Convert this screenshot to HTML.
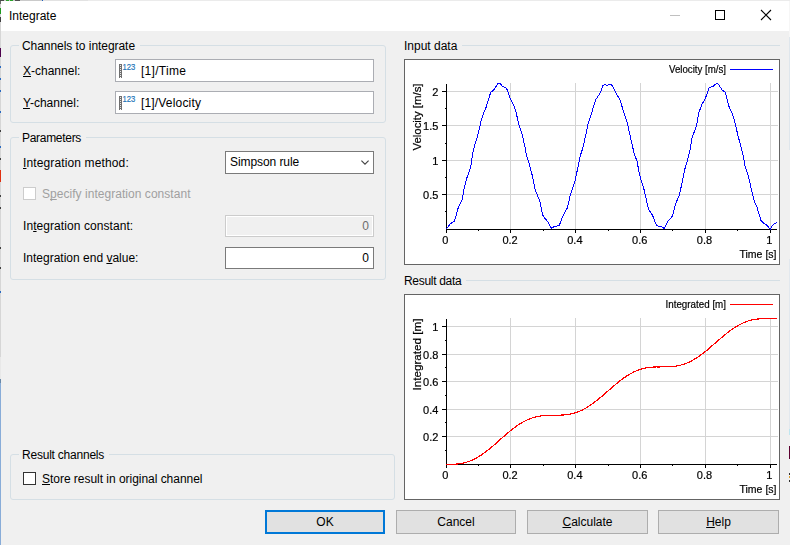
<!DOCTYPE html>
<html lang="en"><head><meta charset="utf-8"><title>Integrate</title>
<style>
html,body{margin:0;padding:0;}
body{width:790px;height:545px;overflow:hidden;background:#f0f0f0;font-family:"Liberation Sans",sans-serif;font-size:12px;color:#000;position:relative;}
.abs,.lbl,.grp,.inp,.btn,.cb,.chart,.gl,.sep{position:absolute;box-sizing:border-box;}
.titlebar{position:absolute;left:1px;top:1px;width:788px;height:30px;background:#fff;}
.title{position:absolute;left:9px;top:8px;font-size:12px;line-height:16px;white-space:nowrap;}
.lbl{white-space:nowrap;line-height:16px;height:16px;}
.grp{border:1px solid #d5dfe5;border-radius:3px;}
.gl{background:#f0f0f0;padding:0 5px 0 3px;line-height:16px;height:16px;white-space:nowrap;}
.inp{background:#fff;border:1px solid #abadb3;height:23px;line-height:21px;white-space:nowrap;}
.inp.cmb{border-color:#7a7a7a;}
.inp.num{height:22px;line-height:20px;border-color:#7a7a7a;text-align:right;padding-right:4px;}
.inp.dis{background:#f0f0f0;border-color:#cccccc;color:#6d6d6d;box-shadow:inset 0 0 0 1px #fff;}
.btn{height:24px;border:1px solid #adadad;background:#e1e1e1;text-align:center;line-height:22px;}
.btn.def{border:2px solid #0078d7;line-height:20px;}
.cb{width:13px;height:13px;border:1px solid #333;background:#fff;}
.cb.dis{border-color:#ccc;}
.sep{height:1px;background:#d5dfe5;}
.chart{left:404px;width:376px;height:206px;background:#fff;}
.chart svg{position:absolute;left:0;top:0;display:block;will-change:transform;}
.t{font-family:"Liberation Sans",sans-serif;font-size:11px;fill:#000;stroke:#000;stroke-width:0.2px;}
u{text-decoration:underline;text-decoration-skip-ink:none;text-underline-offset:1px;text-decoration-thickness:1px;}
</style></head><body>
<div class="titlebar"></div>
<svg class="abs" style="left:0;top:0" width="790" height="545" viewBox="0 0 790 545" shape-rendering="crispEdges">
<rect x="0" y="0" width="790" height="1" fill="#ebebeb"/>
<rect x="0" y="0" width="42" height="1" fill="#cacaca"/><rect x="43" y="0" width="45" height="1" fill="#e2e2e2"/><rect x="0" y="0" width="4" height="1" fill="#4a4a4a"/>
<rect x="6" y="0" width="3" height="1" fill="#2aa02a"/><rect x="10" y="0" width="3" height="1" fill="#2aa02a"/>
<rect x="15" y="0" width="5" height="1" fill="#505050"/><rect x="42" y="0" width="1" height="1" fill="#2060c0"/>
<rect x="0" y="1" width="1" height="378" fill="#d6d6d6"/>
<rect x="0" y="357" width="1" height="22" fill="#e8e8e8"/>
<rect x="0" y="1" width="1" height="3" fill="#6a6a6a"/>
<rect x="0" y="8" width="1" height="6" fill="#1f9a1f"/>
<rect x="0" y="17" width="1" height="5" fill="#404040"/>
<rect x="0" y="48" width="1" height="9" fill="#4c004c"/>
<rect x="0" y="66" width="1" height="2" fill="#2a6ac0"/><rect x="0" y="78" width="1" height="2" fill="#2a6ac0"/><rect x="0" y="90" width="1" height="2" fill="#2a6ac0"/><rect x="0" y="111" width="1" height="2" fill="#2a6ac0"/>
<rect x="0" y="130" width="1" height="2" fill="#404040"/><rect x="0" y="146" width="1" height="2" fill="#2a6ac0"/><rect x="0" y="158" width="1" height="2" fill="#404040"/>
<rect x="0" y="170" width="1" height="12" fill="#e03010"/>
<rect x="0" y="195" width="1" height="2" fill="#404040"/><rect x="0" y="207" width="1" height="2" fill="#404040"/><rect x="0" y="247" width="1" height="2" fill="#404040"/><rect x="0" y="267" width="1" height="2" fill="#404040"/><rect x="0" y="291" width="1" height="2" fill="#2a6ac0"/>
<rect x="0" y="379" width="1" height="166" fill="#88acd8"/>
<rect x="0" y="379" width="1" height="4" fill="#6888a8"/>
<rect x="789" y="1" width="1" height="36" fill="#f6f6f6"/>
<rect x="789" y="37" width="1" height="113" fill="#dfe6ec"/>
<rect x="789" y="259" width="1" height="170" fill="#e2e8ee"/>
<rect x="789" y="429" width="1" height="6" fill="#bfe6f0"/>
<rect x="789" y="446" width="1" height="13" fill="#5c0030"/>
<rect x="789" y="473" width="1" height="2" fill="#303030"/><rect x="789" y="476" width="1" height="2" fill="#e0a030"/><rect x="789" y="480" width="1" height="2" fill="#303030"/>
</svg>
<div class="title">Integrate</div>
<svg class="abs" style="left:660px;top:0" width="130" height="31" viewBox="660 0 130 31">
<rect x="670" y="15" width="10" height="1" fill="#c0c0c0"/>
<rect x="715.5" y="10.5" width="9" height="9" fill="none" stroke="#000" stroke-width="1"/>
<path d="M761 10 L771 20 M771 10 L761 20" stroke="#000" stroke-width="1.1" fill="none"/>
</svg>

<div class="grp" style="left:10px;top:45px;width:376px;height:78px"></div>
<div class="gl" style="left:19px;top:38px;letter-spacing:-0.05px">Channels to integrate</div>
<div class="lbl" style="left:23px;top:63px"><u>X</u>-channel:</div>
<div class="inp" style="left:115px;top:59px;width:259px"><svg class="abs" style="left:2px;top:2px" width="20" height="16" viewBox="118 62 20 16">
<rect x="119" y="64" width="3" height="14" fill="#6e6e6e"/>
<rect x="120" y="65" width="1" height="1" fill="#e8e8e8"/><rect x="120" y="67" width="1" height="1" fill="#e8e8e8"/><rect x="120" y="69" width="1" height="1" fill="#e8e8e8"/><rect x="120" y="71" width="1" height="1" fill="#e8e8e8"/><rect x="120" y="73" width="1" height="1" fill="#e8e8e8"/><rect x="120" y="75" width="1" height="1" fill="#e8e8e8"/><rect x="120" y="77" width="1" height="1" fill="#fff"/>
<text x="122.6" y="70" font-family="Liberation Sans, sans-serif" font-size="9.9" fill="#1f74b8" stroke="#1f74b8" stroke-width="0.2" textLength="12.8" lengthAdjust="spacingAndGlyphs">123</text>
</svg><span class="abs" style="left:25px;top:1px;letter-spacing:0.28px">[1]/Time</span></div>
<div class="lbl" style="left:23px;top:95px"><u>Y</u>-channel:</div>
<div class="inp" style="left:115px;top:91px;width:259px"><svg class="abs" style="left:2px;top:2px" width="20" height="16" viewBox="118 62 20 16">
<rect x="119" y="64" width="3" height="14" fill="#6e6e6e"/>
<rect x="120" y="65" width="1" height="1" fill="#e8e8e8"/><rect x="120" y="67" width="1" height="1" fill="#e8e8e8"/><rect x="120" y="69" width="1" height="1" fill="#e8e8e8"/><rect x="120" y="71" width="1" height="1" fill="#e8e8e8"/><rect x="120" y="73" width="1" height="1" fill="#e8e8e8"/><rect x="120" y="75" width="1" height="1" fill="#e8e8e8"/><rect x="120" y="77" width="1" height="1" fill="#fff"/>
<text x="122.6" y="70" font-family="Liberation Sans, sans-serif" font-size="9.9" fill="#1f74b8" stroke="#1f74b8" stroke-width="0.2" textLength="12.8" lengthAdjust="spacingAndGlyphs">123</text>
</svg><span class="abs" style="left:25px;top:1px;letter-spacing:0.17px">[1]/Velocity</span></div>

<div class="grp" style="left:10px;top:137px;width:376px;height:143px"></div>
<div class="gl" style="left:19px;top:130px;letter-spacing:-0.3px">Parameters</div>
<div class="lbl" style="left:23px;top:155px;letter-spacing:0.13px"><u>I</u>ntegration method:</div>
<div class="inp cmb" style="left:225px;top:151px;width:149px"><span class="abs" style="left:4px;top:0;letter-spacing:-0.08px">Simpson rule</span>
<svg class="abs" style="left:135px;top:8px" width="10" height="7" viewBox="0 0 10 7"><path d="M0.4 0.6 L4 4.2 L7.6 0.6" stroke="#404040" stroke-width="1.1" fill="none"/></svg></div>
<div class="cb dis" style="left:23px;top:187px"></div>
<div class="lbl" style="left:42px;top:186px;color:#a0a0a0;letter-spacing:0.04px">S<u>p</u>ecify integration constant</div>
<div class="lbl" style="left:23px;top:218px;letter-spacing:0.07px">In<u>t</u>egration constant:</div>
<div class="inp num dis" style="left:225px;top:215px;width:149px">0</div>
<div class="lbl" style="left:23px;top:250px">Integration end <u>v</u>alue:</div>
<div class="inp num" style="left:225px;top:247px;width:149px">0</div>

<div class="grp" style="left:10px;top:454px;width:385px;height:46px"></div>
<div class="gl" style="left:19px;top:447px;letter-spacing:-0.22px">Result channels</div>
<div class="cb" style="left:23px;top:472px"></div>
<div class="lbl" style="left:42px;top:471px;letter-spacing:-0.03px"><u>S</u>tore result in original channel</div>

<div class="lbl" style="left:404px;top:38px">Input data</div>
<div class="sep" style="left:462px;top:45px;width:318px"></div>
<div class="lbl" style="left:404px;top:273px;letter-spacing:-0.3px">Result data</div>
<div class="sep" style="left:466px;top:280px;width:314px"></div>
<div class="chart" style="top:59px">
<svg width="376" height="206" viewBox="404 59 376 206">
<rect x="510" y="83" width="1" height="146" fill="#d4d4d4"/><rect x="575" y="83" width="1" height="146" fill="#d4d4d4"/><rect x="640" y="83" width="1" height="146" fill="#d4d4d4"/><rect x="705" y="83" width="1" height="146" fill="#d4d4d4"/><rect x="770" y="83" width="1" height="146" fill="#d4d4d4"/><rect x="447" y="194" width="331" height="1" fill="#d4d4d4"/><rect x="447" y="160" width="331" height="1" fill="#d4d4d4"/><rect x="447" y="125" width="331" height="1" fill="#d4d4d4"/><rect x="447" y="91" width="331" height="1" fill="#d4d4d4"/>
<rect x="446" y="84" width="1" height="146" fill="#000"/>
<rect x="446" y="229" width="331" height="1" fill="#000"/>
<rect x="446" y="229" width="1" height="4" fill="#000"/>
<rect x="478" y="229" width="1" height="2" fill="#000"/>
<rect x="510" y="229" width="1" height="4" fill="#000"/>
<rect x="543" y="229" width="1" height="2" fill="#000"/>
<rect x="575" y="229" width="1" height="4" fill="#000"/>
<rect x="608" y="229" width="1" height="2" fill="#000"/>
<rect x="640" y="229" width="1" height="4" fill="#000"/>
<rect x="672" y="229" width="1" height="2" fill="#000"/>
<rect x="705" y="229" width="1" height="4" fill="#000"/>
<rect x="737" y="229" width="1" height="2" fill="#000"/>
<rect x="770" y="229" width="1" height="4" fill="#000"/>
<text x="445.3" y="244" text-anchor="middle" class="t">0</text>
<text x="510.1" y="244" text-anchor="middle" class="t">0.2</text>
<text x="574.9" y="244" text-anchor="middle" class="t">0.4</text>
<text x="639.7" y="244" text-anchor="middle" class="t">0.6</text>
<text x="704.5" y="244" text-anchor="middle" class="t">0.8</text>
<text x="769.3" y="244" text-anchor="middle" class="t">1</text>
<rect x="442" y="194" width="4" height="1" fill="#000"/>
<text x="438.4" y="199" text-anchor="end" class="t">0.5</text>
<rect x="442" y="160" width="4" height="1" fill="#000"/>
<text x="438.4" y="165" text-anchor="end" class="t">1</text>
<rect x="442" y="125" width="4" height="1" fill="#000"/>
<text x="438.4" y="130" text-anchor="end" class="t">1.5</text>
<rect x="442" y="91" width="4" height="1" fill="#000"/>
<text x="438.4" y="96" text-anchor="end" class="t">2</text>
<rect x="445" y="211" width="1" height="1" fill="#000"/>
<rect x="445" y="177" width="1" height="1" fill="#000"/>
<rect x="445" y="143" width="1" height="1" fill="#000"/>
<rect x="445" y="108" width="1" height="1" fill="#000"/>
<text x="776.5" y="258" text-anchor="end" class="t" textLength="37" lengthAdjust="spacingAndGlyphs">Time [s]</text>
<text x="726" y="73" text-anchor="end" class="t" textLength="57" lengthAdjust="spacingAndGlyphs">Velocity [m/s]</text>
<rect x="730" y="69" width="43" height="1" fill="#0000ff"/>
<text transform="translate(420.8,83.5) rotate(-90)" text-anchor="end" class="t" textLength="67" lengthAdjust="spacingAndGlyphs">Velocity [m/s]</text>
<polyline points="446.5,228.9 450.4,223.8 454.5,221.2 458.3,207.5 462.4,199.2 463.6,190.8 466.6,178.6 470.5,167.9 471.5,162.2 472.4,154.6 474.3,146.5 477.3,137.1 480.4,124.2 481.4,119.6 483.9,112.0 486.1,107.4 488.4,99.8 490.6,92.6 494.1,89.4 497.9,83.4 500.1,83.4 502.4,86.4 506.2,87.9 507.8,91.0 510.0,98.3 514.3,106.6 516.1,112.7 519.2,125.7 522.2,134.8 525.3,148.5 526.3,155.0 529.1,163.4 532.1,174.8 535.2,190.0 539.7,200.7 542.3,213.6 543.5,216.7 547.4,221.2 551.6,228.4 554.6,226.3 559.1,225.8 562.9,215.9 567.5,207.5 570.6,193.8 575.1,180.9 578.2,165.7 580.5,155.0 582.7,148.5 585.8,134.8 587.8,124.9 591.1,115.0 594.2,104.4 595.7,99.8 600.3,92.9 602.5,86.1 604.5,84.3 607.1,85.3 610.9,84.3 612.7,86.1 616.2,93.7 620.0,99.8 621.6,105.1 624.6,115.0 627.7,124.2 629.2,131.8 633.0,148.5 634.5,155.0 636.8,160.3 639.8,175.6 644.4,190.8 647.5,205.3 649.0,209.8 652.8,215.9 656.6,225.8 660.4,226.3 664.2,228.4 668.0,221.2 672.6,215.9 675.7,203.7 679.5,194.6 681.8,183.9 684.5,170.2 687.5,160.3 690.1,149.3 692.1,137.9 696.5,125.7 698.8,112.7 702.3,103.6 705.4,98.3 709.2,87.6 713.0,86.4 716.5,83.3 718.3,84.3 722.1,89.9 725.5,92.5 728.7,105.9 732.8,115.0 735.0,122.6 738.1,136.3 741.1,147.0 743.1,155.0 744.9,165.7 748.4,176.3 751.0,187.7 754.1,200.7 757.1,207.5 760.9,220.3 763.6,223.2 766.3,224.6 770.3,229.2 772.6,225.3 774.2,223.6 776.8,222.7" fill="none" stroke="#0000ff" stroke-width="1" stroke-linejoin="round" shape-rendering="crispEdges"/>
<rect x="404.5" y="59.5" width="375" height="205" fill="none" stroke="#646464" stroke-width="1"/>
</svg></div><div class="chart" style="top:294px">
<svg width="376" height="206" viewBox="404 294 376 206">
<rect x="510" y="318" width="1" height="146" fill="#d4d4d4"/><rect x="575" y="318" width="1" height="146" fill="#d4d4d4"/><rect x="640" y="318" width="1" height="146" fill="#d4d4d4"/><rect x="705" y="318" width="1" height="146" fill="#d4d4d4"/><rect x="770" y="318" width="1" height="146" fill="#d4d4d4"/><rect x="447" y="436" width="331" height="1" fill="#d4d4d4"/><rect x="447" y="409" width="331" height="1" fill="#d4d4d4"/><rect x="447" y="381" width="331" height="1" fill="#d4d4d4"/><rect x="447" y="354" width="331" height="1" fill="#d4d4d4"/><rect x="447" y="326" width="331" height="1" fill="#d4d4d4"/>
<rect x="446" y="319" width="1" height="146" fill="#000"/>
<rect x="446" y="464" width="331" height="1" fill="#000"/>
<rect x="446" y="464" width="1" height="4" fill="#000"/>
<rect x="478" y="464" width="1" height="2" fill="#000"/>
<rect x="510" y="464" width="1" height="4" fill="#000"/>
<rect x="543" y="464" width="1" height="2" fill="#000"/>
<rect x="575" y="464" width="1" height="4" fill="#000"/>
<rect x="608" y="464" width="1" height="2" fill="#000"/>
<rect x="640" y="464" width="1" height="4" fill="#000"/>
<rect x="672" y="464" width="1" height="2" fill="#000"/>
<rect x="705" y="464" width="1" height="4" fill="#000"/>
<rect x="737" y="464" width="1" height="2" fill="#000"/>
<rect x="770" y="464" width="1" height="4" fill="#000"/>
<text x="445.3" y="479" text-anchor="middle" class="t">0</text>
<text x="510.1" y="479" text-anchor="middle" class="t">0.2</text>
<text x="574.9" y="479" text-anchor="middle" class="t">0.4</text>
<text x="639.7" y="479" text-anchor="middle" class="t">0.6</text>
<text x="704.5" y="479" text-anchor="middle" class="t">0.8</text>
<text x="769.3" y="479" text-anchor="middle" class="t">1</text>
<rect x="442" y="436" width="4" height="1" fill="#000"/>
<text x="438.4" y="441" text-anchor="end" class="t">0.2</text>
<rect x="442" y="409" width="4" height="1" fill="#000"/>
<text x="438.4" y="414" text-anchor="end" class="t">0.4</text>
<rect x="442" y="381" width="4" height="1" fill="#000"/>
<text x="438.4" y="386" text-anchor="end" class="t">0.6</text>
<rect x="442" y="354" width="4" height="1" fill="#000"/>
<text x="438.4" y="359" text-anchor="end" class="t">0.8</text>
<rect x="442" y="326" width="4" height="1" fill="#000"/>
<text x="438.4" y="331" text-anchor="end" class="t">1</text>
<rect x="445" y="450" width="1" height="1" fill="#000"/>
<rect x="445" y="422" width="1" height="1" fill="#000"/>
<rect x="445" y="395" width="1" height="1" fill="#000"/>
<rect x="445" y="367" width="1" height="1" fill="#000"/>
<rect x="445" y="340" width="1" height="1" fill="#000"/>
<text x="776.5" y="493" text-anchor="end" class="t" textLength="37" lengthAdjust="spacingAndGlyphs">Time [s]</text>
<text x="726" y="308" text-anchor="end" class="t" textLength="60.5" lengthAdjust="spacingAndGlyphs">Integrated [m]</text>
<rect x="730" y="304" width="43" height="1" fill="#ff0000"/>
<text transform="translate(420.8,318.5) rotate(-90)" text-anchor="end" class="t" textLength="72" lengthAdjust="spacingAndGlyphs">Integrated [m]</text>
<polyline points="446.5,464.5 450.4,464.4 454.5,464.3 458.3,463.9 462.4,463.3 463.6,463.0 466.6,462.2 470.5,460.8 471.5,460.4 472.4,460.0 474.3,459.1 477.3,457.5 480.4,455.6 481.4,454.9 483.9,453.2 486.1,451.6 488.4,449.8 490.6,448.0 494.1,445.0 497.9,441.6 500.1,439.7 502.4,437.6 506.2,434.3 507.8,432.9 510.0,431.1 514.3,427.7 516.1,426.4 519.2,424.3 522.2,422.4 525.3,420.8 526.3,420.3 529.1,419.1 532.1,418.0 535.2,417.1 539.7,416.1 542.3,415.8 543.5,415.7 547.4,415.4 551.6,415.3 554.6,415.3 559.1,415.2 562.9,415.0 567.5,414.5 570.6,414.0 575.1,412.8 578.2,411.8 580.5,410.8 582.7,409.8 585.8,408.1 587.8,406.9 591.1,404.7 594.2,402.5 595.7,401.3 600.3,397.6 602.5,395.8 604.5,394.0 607.1,391.7 610.9,388.4 612.7,386.8 616.2,383.9 620.0,380.8 621.6,379.6 624.6,377.4 627.7,375.4 629.2,374.5 633.0,372.4 634.5,371.7 636.8,370.7 639.8,369.6 644.4,368.3 647.5,367.7 649.0,367.5 652.8,367.1 656.6,366.9 660.4,366.9 664.2,366.8 668.0,366.7 672.6,366.4 675.7,366.1 679.5,365.4 681.8,364.8 684.5,363.9 687.5,362.8 690.1,361.6 692.1,360.6 696.5,358.0 698.8,356.4 702.3,353.9 705.4,351.5 709.2,348.3 713.0,345.0 716.5,342.0 718.3,340.4 722.1,337.1 725.5,334.3 728.7,331.8 732.8,328.8 735.0,327.3 738.1,325.5 741.1,323.9 743.1,322.9 744.9,322.2 748.4,320.9 751.0,320.2 754.1,319.5 757.1,319.1 760.9,318.7 763.6,318.6 766.3,318.5 770.3,318.4 772.6,318.4 774.2,318.4 776.8,318.3" fill="none" stroke="#ff0000" stroke-width="1.2" stroke-linejoin="round" shape-rendering="crispEdges"/>
<rect x="404.5" y="294.5" width="375" height="205" fill="none" stroke="#646464" stroke-width="1"/>
</svg></div>
<div class="btn def" style="left:265px;top:510px;width:120px">OK</div>
<div class="btn" style="left:396px;top:510px;width:120px">Cancel</div>
<div class="btn" style="left:527px;top:510px;width:121px"><u>C</u>alculate</div>
<div class="btn" style="left:658px;top:510px;width:121px"><u>H</u>elp</div>
</body></html>
